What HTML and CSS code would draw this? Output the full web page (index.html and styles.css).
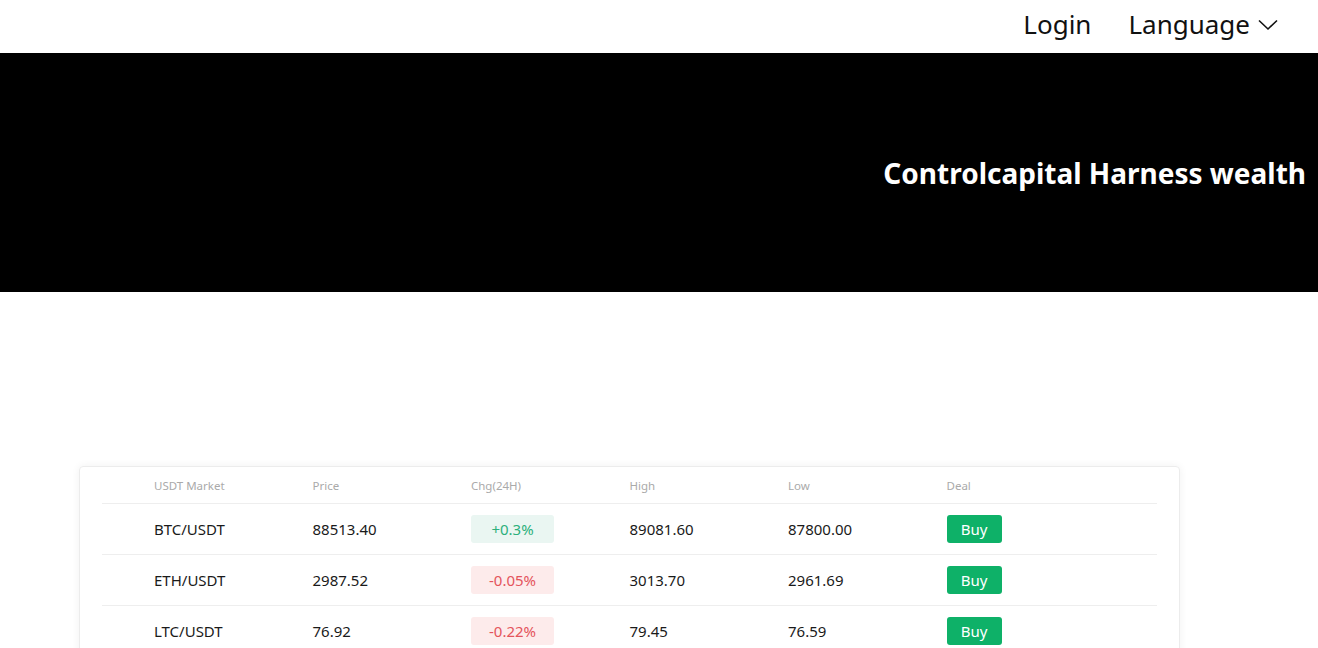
FILE: index.html
```html
<!DOCTYPE html>
<html lang="en">
<head>
<meta charset="utf-8">
<title>Controlcapital</title>
<link rel="stylesheet" href="styles.css">
</head>
<body>
<header class="topbar">
  <nav class="nav">
    <a class="nav-link" href="#">Login</a>
    <a class="nav-link lang" href="#">Language
      <svg class="chev" width="20" height="12" viewBox="0 0 20 12" fill="none" stroke="#111" stroke-width="1.6"><path d="M1 1.5 L10 10 L19 1.5"/></svg>
    </a>
  </nav>
</header>
<section class="banner">
  <h1 class="banner-title">Controlcapital Harness wealth</h1>
</section>
<main class="content">
  <div class="card">
    <div class="row head">
      <div>USDT Market</div><div>Price</div><div>Chg(24H)</div><div>High</div><div>Low</div><div>Deal</div>
    </div>
    <div class="row">
      <div>BTC/USDT</div><div>88513.40</div><div><span class="chg up">+0.3%</span></div><div>89081.60</div><div>87800.00</div><div><a class="buy" href="#">Buy</a></div>
    </div>
    <div class="row">
      <div>ETH/USDT</div><div>2987.52</div><div><span class="chg down">-0.05%</span></div><div>3013.70</div><div>2961.69</div><div><a class="buy" href="#">Buy</a></div>
    </div>
    <div class="row">
      <div>LTC/USDT</div><div>76.92</div><div><span class="chg down">-0.22%</span></div><div>79.45</div><div>76.59</div><div><a class="buy" href="#">Buy</a></div>
    </div>
  </div>
</main>
</body>
</html>
```
FILE: styles.css
```css
* { box-sizing: border-box; }
html, body { margin: 0; padding: 0; }
body {
  font-family: "Noto Sans", "Open Sans", "Liberation Sans", sans-serif;
  color: #111;
  background: #fff;
  overflow: hidden;
}
a { text-decoration: none; color: inherit; }
.topbar {
  height: 53px;
  display: flex;
  justify-content: flex-end;
  align-items: center;
  padding-right: 40px;
  padding-bottom: 5px;
  background: #fff;
}
.nav { display: flex; align-items: center; gap: 37px; }
.nav-link { font-size: 26px; color: #111; line-height: 1; display: flex; align-items: center; }
.lang .chev { margin-left: 8px; margin-top: 2px; }
.banner {
  height: 239px;
  background: #000;
  display: flex;
  align-items: center;
  justify-content: flex-end;
  padding-right: 12px;
}
.banner-title {
  margin: 0;
  color: #fff;
  font-size: 28px;
  font-weight: 700;
}
.content { padding: 174px 138px 0 79px; }
.card {
  border: 1px solid #ececec;
  border-radius: 4px;
  box-shadow: 0 0 8px rgba(0,0,0,0.06);
  padding: 0 22px;
}
.row {
  display: grid;
  grid-template-columns: repeat(6, 1fr);
  padding: 0 52px;
  height: 51px;
  align-items: center;
  border-top: 1px solid #eeeeee;
  font-size: 15px;
  color: #1a1a1a;
}
.row.head {
  border-top: none;
  height: 36px;
  font-size: 11.5px;
  color: #aaaaaa;
}
.chg {
  display: inline-flex;
  justify-content: center;
  align-items: center;
  width: 83px;
  height: 28px;
  border-radius: 3px;
  font-size: 15px;
}
.chg.up { background: #eaf6f2; color: #2cb07c; }
.chg.down { background: #fdebeb; color: #e4545c; }
.buy {
  display: inline-flex;
  justify-content: center;
  align-items: center;
  width: 55px;
  height: 28px;
  border-radius: 3px;
  background: #0eb168;
  color: #fff;
  font-size: 15px;
}
```
